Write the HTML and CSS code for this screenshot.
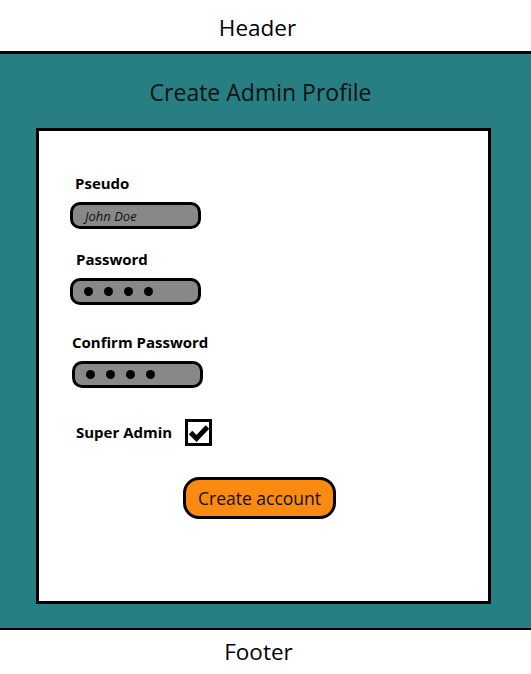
FILE: index.html
```html
<!DOCTYPE html>
<html>
<head>
<meta charset="utf-8">
<link rel="stylesheet" href="styles.css">
</head>
<body>
<header class="header">Header</header>
<main class="main">
  <h1 class="title">Create Admin Profile</h1>
  <section class="card">
    <div class="field f1">
      <label class="label">Pseudo</label>
      <div class="input"><span class="placeholder">John Doe</span></div>
    </div>
    <div class="field f2">
      <label class="label">Password</label>
      <div class="input"><span class="dot"></span><span class="dot"></span><span class="dot"></span><span class="dot"></span></div>
    </div>
    <div class="field f3">
      <label class="label">Confirm Password</label>
      <div class="input"><span class="dot"></span><span class="dot"></span><span class="dot"></span><span class="dot"></span></div>
    </div>
    <div class="check-row">
      <span class="label">Super Admin</span>
      <span class="checkbox">
        <svg width="20" height="20" viewBox="0 0 20 20"><path d="M1.5 9.5 L7.5 15.5 L18.5 4" fill="none" stroke="#000" stroke-width="5" stroke-linejoin="miter"/></svg>
      </span>
    </div>
    <div class="actions">
      <button class="btn">Create account</button>
    </div>
  </section>
</main>
<footer class="footer">Footer</footer>
</body>
</html>
```
FILE: styles.css
```css
* { box-sizing: border-box; }
body {
  margin: 0;
  width: 531px;
  font-family: "Open Sans", "Noto Sans", sans-serif;
  color: #000;
  background: #fff;
}
.header {
  height: 51px;
  display: flex;
  align-items: center;
  justify-content: center;
  font-size: 22.5px;
  padding-top: 4px;
  padding-right: 16px;
}
.main {
  background: #277f84;
  border-top: 3px solid #000;
  border-bottom: 2px solid #000;
  height: 579px;
  padding-top: 1px;
}
.title {
  margin: 0;
  height: 73px;
  display: flex;
  align-items: center;
  justify-content: center;
  font-size: 23px;
  font-weight: 400;
  color: #111;
  padding-right: 10px;
}
.card {
  margin-left: 36px;
  width: 455px;
  height: 476px;
  background: #fff;
  border: 3px solid #000;
  padding-top: 43px;
}
.field {
  display: flex;
  flex-direction: column;
}
.label {
  font-weight: 700;
  font-size: 15px;
  line-height: 19px;
}
.f1 { padding-left: 31px; }
.f1 .label { margin-left: 5px; }
.f2 { padding-left: 31px; margin-top: 21px; }
.f2 .label { margin-left: 6px; }
.f3 { padding-left: 33px; margin-top: 28px; }
.f3 .label { margin-left: 0; }
.input {
  margin-top: 9px;
  width: 131px;
  height: 27px;
  background: #888;
  border: 3px solid #000;
  border-radius: 10px;
  display: flex;
  align-items: center;
  padding-left: 11px;
  gap: 11px;
}
.placeholder {
  font-style: italic;
  font-size: 13px;
  color: #111;
  padding-left: 1px;
}
.dot {
  width: 9px;
  height: 9px;
  border-radius: 50%;
  background: #000;
}
.check-row {
  margin-top: 31px;
  padding-left: 37px;
  display: flex;
  align-items: center;
  gap: 13px;
}
.checkbox {
  width: 27px;
  height: 27px;
  border: 3px solid #000;
  display: flex;
  align-items: center;
  justify-content: center;
}
.actions {
  margin-top: 31px;
  padding-left: 144px;
}
.btn {
  width: 153px;
  height: 42px;
  background: #fa8a10;
  border: 3px solid #000;
  border-radius: 16px;
  font-family: inherit;
  font-size: 17.5px;
  color: #111;
  padding: 0;
}
.footer {
  height: 44px;
  display: flex;
  align-items: center;
  justify-content: center;
  font-size: 22.5px;
  padding-bottom: 2px;
  padding-right: 14px;
}
```
